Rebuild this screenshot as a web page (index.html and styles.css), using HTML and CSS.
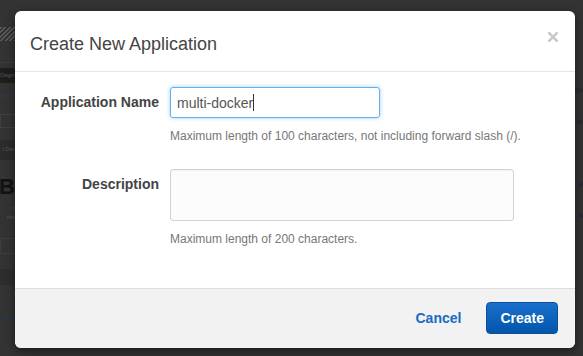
FILE: index.html
```html
<!DOCTYPE html>
<html lang="en">
<head>
<meta charset="utf-8">
<title>Create New Application</title>
<link rel="stylesheet" href="styles.css">
</head>
<body>
<div class="page">
  <aside class="side">
    <div class="s-top"></div>
    <div class="s-logo"></div>
    <div class="s-gap"></div>
    <div class="s-region"><span>Oregon</span></div>
    <div class="s-link"><span>ate New</span></div>
    <div class="s-box"></div>
    <div class="s-band"><span>t Over</span></div>
    <div class="s-big"><span>B</span></div>
    <div class="s-small"><span>n</span><span>rtes</span></div>
    <div class="s-box2"></div>
    <div class="s-band2"></div>
    <div class="s-chart"><span class="dot"></span></div>
  </aside>
  <div class="edge">
    <div class="e-qu">qu</div>
    <div class="e-le">le</div>
    <div class="e-p">p</div>
    <div class="e-n">n</div>
  </div>
</div>

<div class="modal" role="dialog" aria-labelledby="dlg-title">
  <div class="modal-header">
    <h4 class="modal-title" id="dlg-title">Create New Application</h4>
    <span class="close" aria-label="Close">
      <svg width="10" height="10" viewBox="0 0 10 10"><path d="M1.2 1.2 L8.8 8.8 M8.8 1.2 L1.2 8.8" stroke="#c9c9c9" stroke-width="2.6" stroke-linecap="square" fill="none"/></svg>
    </span>
  </div>
  <div class="modal-body">
    <label class="label">Application Name</label>
    <div class="control">
      <div class="input"><span>multi-docker</span><span class="caret"></span></div>
      <div class="help">Maximum length of 100 characters, not including forward slash (/).</div>
    </div>
    <label class="label">Description</label>
    <div class="control">
      <div class="textarea"></div>
      <div class="help">Maximum length of 200 characters.</div>
    </div>
  </div>
  <div class="modal-footer">
    <a class="cancel">Cancel</a>
    <button class="btn-primary" type="button">Create</button>
  </div>
</div>
</body>
</html>
```

FILE: styles.css
```css
html, body {
  margin: 0;
  padding: 0;
}
body {
  width: 583px;
  height: 356px;
  overflow: hidden;
  background: #333333;
  font-family: "Liberation Sans", Arial, sans-serif;
}

/* dimmed page behind the dialog */
.page {
  display: flex;
  justify-content: space-between;
  height: 356px;
}
.side {
  width: 15px;
  overflow: hidden;
  display: flex;
  flex-direction: column;
}
.side > div {
  display: flex;
  justify-content: flex-end;
  white-space: nowrap;
  flex: none;
}
.s-top { height: 27px; }
.s-logo {
  height: 14px;
  background: repeating-linear-gradient(135deg, #5c5c5c 0 1.5px, #333 1.5px 3.2px);
}
.s-gap {
  height: 21px;
  border-bottom: 1px solid #3b3b3b;
}
.s-region {
  margin-top: 5px;
  height: 15px;
  background: #1e1e1e;
  font-size: 4.5px;
  line-height: 15px;
  color: #5d5d5d;
}
.s-link {
  margin-top: 8px;
  height: 9px;
  font-size: 4px;
  line-height: 9px;
  color: #2c3f63;
}
.s-box {
  margin-top: 14px;
  height: 12px;
  border: 1px solid #404040;
  border-right: none;
}
.s-band {
  margin-top: 12px;
  height: 20px;
  background: #2b2b2b;
  font-size: 4.5px;
  line-height: 20px;
  color: #5f5f5f;
}
.s-big {
  margin-top: 14px;
  height: 26px;
  font-size: 22px;
  font-weight: bold;
  line-height: 26px;
  color: #121212;
}
.s-small {
  margin-top: 4px;
  flex-direction: column;
  align-items: flex-end;
  font-size: 5px;
  line-height: 9px;
  color: #575757;
}
.s-box2 {
  margin-top: 16px;
  height: 14px;
  border: 1px solid #3d3d3d;
  border-right: none;
}
.s-band2 {
  margin-top: 15px;
  height: 16px;
  background: #2d2d2d;
}
.s-chart {
  margin-top: 34px;
  height: 1px;
  background: #23324a;
  align-items: center;
}
.s-chart .dot {
  width: 3px;
  height: 3px;
  border-radius: 50%;
  background: #24385a;
  margin-right: 7px;
}
.edge {
  width: 10px;
  display: flex;
  flex-direction: column;
  align-items: flex-end;
  font-size: 8px;
  color: #1b2231;
  white-space: nowrap;
}
.e-qu { margin-top: 84px; line-height: 12px; }
.e-le { margin-top: 20px; line-height: 12px; }
.e-p { margin-top: 50px; line-height: 12px; }
.e-n { margin-top: 20px; line-height: 12px; }

/* dialog */
.modal {
  position: absolute;
  left: 15px;
  top: 11px;
  width: 560px;
  height: 337px;
  background: #ffffff;
  border-radius: 6px;
  box-shadow: 0 3px 10px rgba(0, 0, 0, 0.5);
  display: flex;
  flex-direction: column;
  overflow: hidden;
}
.modal-header {
  flex: none;
  display: flex;
  justify-content: space-between;
  align-items: flex-start;
  padding: 23px 17px 17px 15px;
  border-bottom: 1px solid #e5e5e5;
}
.modal-title {
  margin: 0;
  font-size: 18px;
  font-weight: normal;
  line-height: 20px;
  color: #444444;
}
.close {
  display: block;
  width: 10px;
  height: 10px;
  margin-top: -2px;
}
.close svg { display: block; }

.modal-body {
  flex: 1;
  padding: 15px 15px 0;
  display: grid;
  grid-template-columns: 130px 1fr;
  column-gap: 10px;
  row-gap: 24px;
  align-content: start;
}
.label {
  font-size: 14px;
  font-weight: bold;
  color: #444444;
  text-align: right;
  line-height: 31px;
  padding-right: 1px;
}
.input {
  width: 210px;
  height: 31px;
  box-sizing: border-box;
  border: 1px solid #66afe9;
  border-radius: 3px;
  box-shadow: 0 0 4px rgba(102, 175, 233, 0.6);
  padding: 0 6px;
  display: flex;
  align-items: center;
  font-size: 14px;
  color: #555555;
}
.caret {
  width: 1px;
  height: 17px;
  background: #333;
}
.help {
  margin-top: 10px;
  font-size: 12px;
  line-height: 17px;
  color: #777777;
}
.textarea {
  width: 344px;
  height: 52px;
  box-sizing: border-box;
  border: 1px solid #d3d3d3;
  border-radius: 3px;
  background: #fcfcfc;
  box-shadow: inset 0 1px 1px rgba(0, 0, 0, 0.04);
}

.modal-footer {
  flex: none;
  box-sizing: border-box;
  height: 60px;
  border-top: 1px solid #dddddd;
  background: #f2f2f2;
  display: flex;
  justify-content: flex-end;
  align-items: center;
  gap: 25px;
  padding: 0 17px 1px 0;
}
.cancel {
  font-size: 14px;
  font-weight: bold;
  color: #1a69c4;
}
.btn-primary {
  height: 32px;
  padding: 0 13px;
  border: 1px solid #0a4f9c;
  border-radius: 4px;
  background: linear-gradient(#1970cc, #0255aa);
  color: #ffffff;
  font-family: "Liberation Sans", Arial, sans-serif;
  font-size: 14px;
  font-weight: bold;
}
```
